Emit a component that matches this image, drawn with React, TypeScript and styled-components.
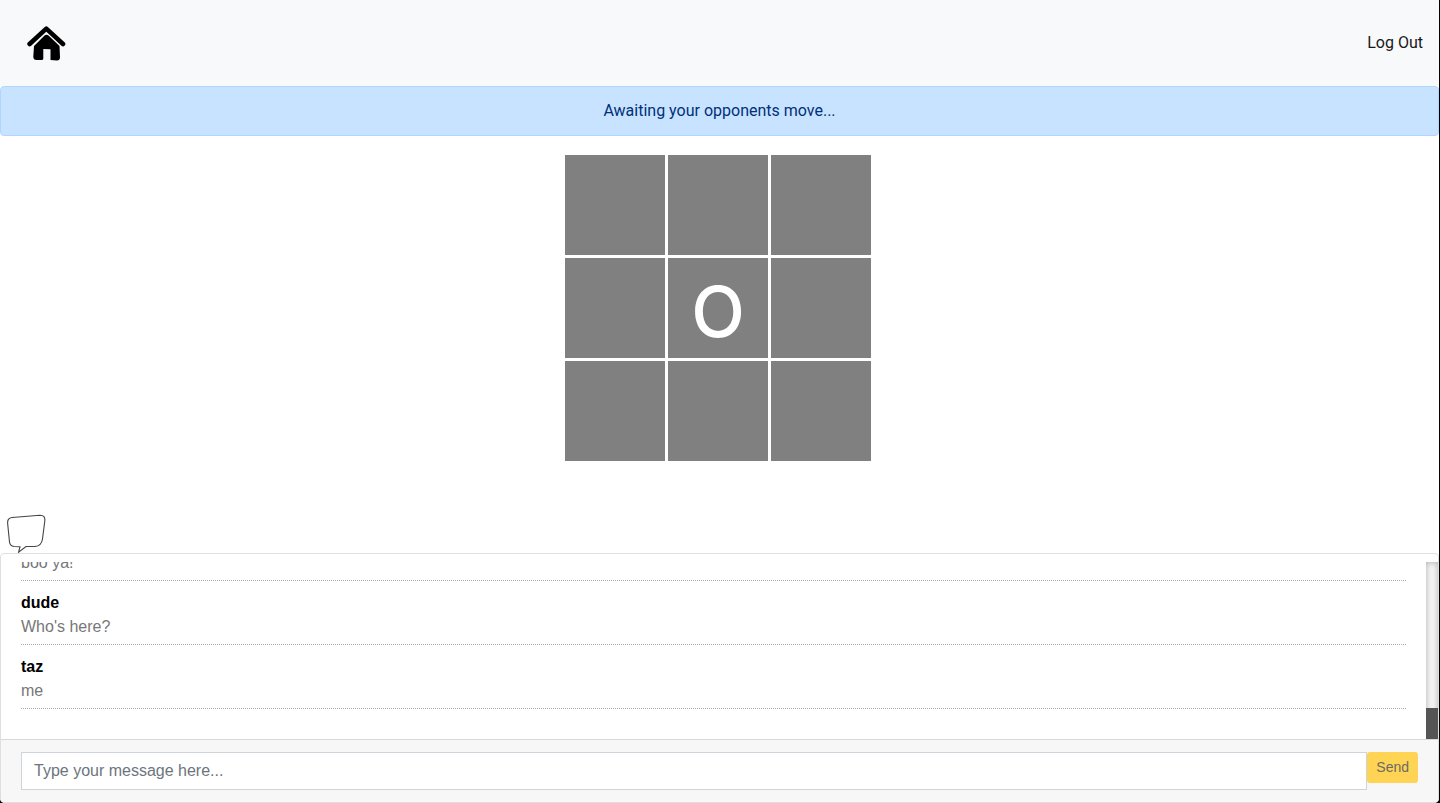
import React from "react";
import styled, { createGlobalStyle } from "styled-components";

const GlobalStyle = createGlobalStyle`
  *, *::before, *::after { box-sizing: border-box; }
  body {
    margin: 0;
    background: #000;
    font-family: Roboto, "Liberation Sans", sans-serif;
    font-size: 16px;
    line-height: 24px;
    color: #212529;
  }
`;

const Page = styled.div`
  display: flex;
  flex-direction: column;
  min-height: 100vh;
  margin-right: 1px;
  background: #fff;
  border-radius: 0 0 5px 5px;
`;

const Navbar = styled.nav`
  display: flex;
  align-items: center;
  justify-content: space-between;
  height: 86px;
  padding: 0 16px;
  background: #f8f9fa;
`;

const HomeLink = styled.a`
  display: flex;
  padding: 0 10px;
`;

const LogOutLink = styled.a`
  color: #16181b;
  text-decoration: none;
`;

const Status = styled.div`
  margin-bottom: 16px;
  padding: 12px 20px;
  border: 1px solid #b0d6ff;
  border-radius: 4px;
  background: #c8e3ff;
  color: #00307a;
  text-align: center;
`;

const Board = styled.div`
  display: grid;
  grid-template-columns: repeat(3, 100px);
  grid-auto-rows: 100px;
  gap: 3px;
  align-self: center;
  padding: 3px 3px 0 0;
`;

const Square = styled.button`
  padding: 8px 0 0;
  border: 0;
  background: #808080;
  color: #fff;
  font-family: Inter, "Liberation Sans", sans-serif;
  font-size: 70px;
  font-weight: 500;
  line-height: 84px;
`;

const ChatToggle = styled.button`
  display: flex;
  align-self: flex-start;
  margin-top: auto;
  padding: 0 6px;
  border: 0;
  background: transparent;
`;

const Chat = styled.section`
  padding-top: 8px;
  border: 1px solid #dfdfdf;
  border-radius: 4px;
  font-family: "Liberation Sans", Arial, sans-serif;
`;

const History = styled.div`
  display: flex;
  height: 177px;
`;

const Messages = styled.ul`
  display: flex;
  flex: 1;
  flex-direction: column;
  justify-content: flex-end;
  overflow: hidden;
  margin: 0;
  padding: 0 20px 20px;
  list-style: none;
`;

const Message = styled.li`
  flex: none;
  margin-bottom: 10px;
  padding-bottom: 5px;
  border-bottom: 1px dotted #b3a9a9;
`;

const Author = styled.strong`
  display: block;
  color: #000;
`;

const MessageText = styled.p`
  margin: 0;
  color: #777;
`;

const ScrollTrack = styled.div`
  display: flex;
  flex-direction: column;
  justify-content: flex-end;
  width: 12px;
  background: #f5f5f5;
  box-shadow: inset 0 0 6px rgba(0, 0, 0, 0.3);
`;

const ScrollThumb = styled.div`
  height: 31px;
  background: #555;
`;

const Composer = styled.form`
  display: flex;
  align-items: flex-start;
  padding: 12px 20px;
  border-top: 1px solid #d8d8d8;
  border-radius: 0 0 3px 3px;
  background: #f7f7f7;
`;

const MessageInput = styled.input`
  flex: 1;
  min-width: 0;
  height: 38px;
  padding: 6px 12px;
  border: 1px solid #ced4da;
  border-radius: 0;
  background: #fff;
  font: inherit;
  &::placeholder {
    color: #6c757d;
    opacity: 1;
  }
`;

const SendButton = styled.button`
  height: 31px;
  padding: 0 9px;
  border: 0;
  border-radius: 3px;
  background: #ffd454;
  color: #6b6b62;
  font-family: inherit;
  font-size: 14px;
  line-height: 21px;
`;

const HomeIcon = () => (
  <svg width="40" height="40" viewBox="0 0 40 40" aria-hidden="true">
    <path
      d="M3.6 21 L20.300 5.600 L37 21"
      fill="none"
      stroke="#000"
      strokeWidth="4.6"
      strokeLinecap="round"
      strokeLinejoin="round"
    />
    <path
      d="M8 23 L18.500 12.600 Q20.500 11 22.500 12.600 L33.500 23 L34 34 Q34 37.600 31 37.600 L24.500 37 V26.300 L17.300 26 V35.500 Q17.300 37 15.500 37 L10.500 37 Q7.300 37 7.300 33.500 Z"
      fill="#000"
    />
  </svg>
);

const ChatIcon = () => (
  <svg width="40" height="40" viewBox="0 0 40 40" aria-hidden="true">
    <path
      d="M6 4.500 L34 2.200 Q39.500 2.200 38.800 8 L36.500 26 Q35.500 33 29 33.500 H20 L12.600 39.200 L14 33.700 L8 33.500 Q4 33 3.500 29 L1.700 11 Q1 5 6 4.500 Z"
      fill="#fff"
      stroke="#444"
      strokeWidth="1.1"
    />
  </svg>
);

const squares = ["", "", "", "", "O", "", "", "", ""];

const messages: { author?: string; text: string }[] = [
  { text: "boo ya!" },
  { author: "dude", text: "Who's here?" },
  { author: "taz", text: "me" },
];

export default function App() {
  return (
    <>
      <GlobalStyle />
      <Page>
        <Navbar>
          <HomeLink href="#home" aria-label="Home">
            <HomeIcon />
          </HomeLink>
          <LogOutLink href="#logout">Log Out</LogOutLink>
        </Navbar>
        <Status role="status">Awaiting your opponents move...</Status>
        <Board>
          {squares.map((mark, i) => (
            <Square key={i} type="button" aria-label={`Square ${i + 1}`}>
              {mark}
            </Square>
          ))}
        </Board>
        <ChatToggle type="button" aria-label="Toggle chat">
          <ChatIcon />
        </ChatToggle>
        <Chat>
          <History>
            <Messages>
              {messages.map((m, i) => (
                <Message key={i}>
                  {m.author && <Author>{m.author}</Author>}
                  <MessageText>{m.text}</MessageText>
                </Message>
              ))}
            </Messages>
            <ScrollTrack>
              <ScrollThumb />
            </ScrollTrack>
          </History>
          <Composer onSubmit={(e) => e.preventDefault()}>
            <MessageInput
              type="text"
              aria-label="Message"
              placeholder="Type your message here..."
            />
            <SendButton type="submit">Send</SendButton>
          </Composer>
        </Chat>
      </Page>
    </>
  );
}
